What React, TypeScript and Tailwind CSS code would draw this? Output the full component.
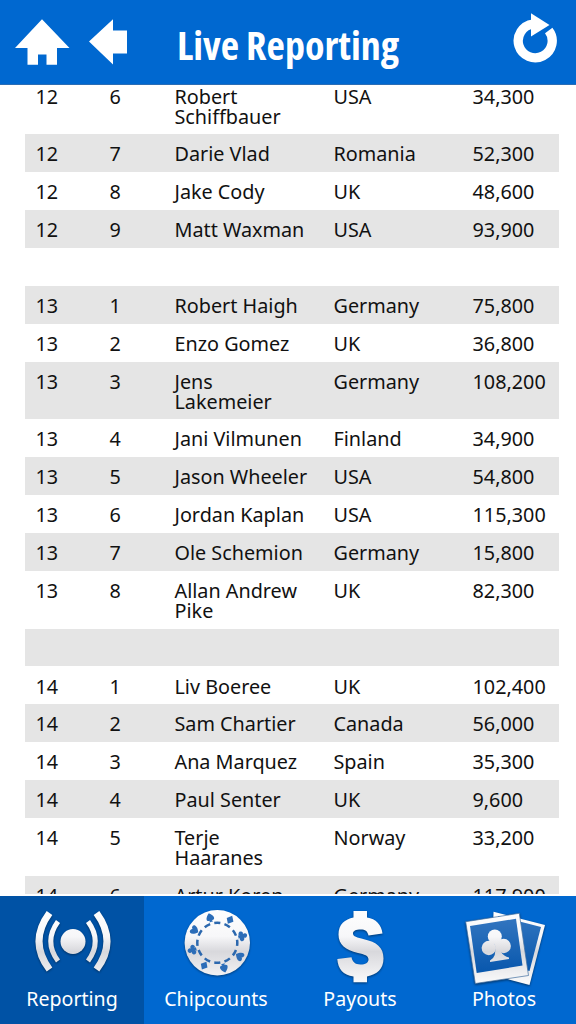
import { clsx } from 'clsx';
import type { ReactNode } from 'react';

type Row = {
  table?: string;
  seat?: string;
  name?: string;
  country?: string;
  chips?: string;
};

const rows: Row[] = [
  { table: '12', seat: '6', name: 'Robert Schiffbauer', country: 'USA', chips: '34,300' },
  { table: '12', seat: '7', name: 'Darie Vlad', country: 'Romania', chips: '52,300' },
  { table: '12', seat: '8', name: 'Jake Cody', country: 'UK', chips: '48,600' },
  { table: '12', seat: '9', name: 'Matt Waxman', country: 'USA', chips: '93,900' },
  {},
  { table: '13', seat: '1', name: 'Robert Haigh', country: 'Germany', chips: '75,800' },
  { table: '13', seat: '2', name: 'Enzo Gomez', country: 'UK', chips: '36,800' },
  { table: '13', seat: '3', name: 'Jens Lakemeier', country: 'Germany', chips: '108,200' },
  { table: '13', seat: '4', name: 'Jani Vilmunen', country: 'Finland', chips: '34,900' },
  { table: '13', seat: '5', name: 'Jason Wheeler', country: 'USA', chips: '54,800' },
  { table: '13', seat: '6', name: 'Jordan Kaplan', country: 'USA', chips: '115,300' },
  { table: '13', seat: '7', name: 'Ole Schemion', country: 'Germany', chips: '15,800' },
  { table: '13', seat: '8', name: 'Allan Andrew Pike', country: 'UK', chips: '82,300' },
  {},
  { table: '14', seat: '1', name: 'Liv Boeree', country: 'UK', chips: '102,400' },
  { table: '14', seat: '2', name: 'Sam Chartier', country: 'Canada', chips: '56,000' },
  { table: '14', seat: '3', name: 'Ana Marquez', country: 'Spain', chips: '35,300' },
  { table: '14', seat: '4', name: 'Paul Senter', country: 'UK', chips: '9,600' },
  { table: '14', seat: '5', name: 'Terje Haaranes', country: 'Norway', chips: '33,200' },
  { table: '14', seat: '6', name: 'Artur Koren', country: 'Germany', chips: '117,900' },
];

function HomeIcon() {
  return (
    <svg width="56" height="48" viewBox="0 0 56 48" fill="#fff">
      <path d="M28 1.300 55.500 30H43v16.700H32.500V36.500H24v10.200H13.500V30H1Z" />
    </svg>
  );
}

function BackIcon() {
  return (
    <svg width="41" height="46" viewBox="0 0 41 46" fill="#fff">
      <path d="M2 22.500 26 .3V11.500H40v23H26v11Z" />
    </svg>
  );
}

function RefreshIcon() {
  return (
    <svg width="46" height="52" viewBox="0 0 46 52">
      <path d="M35.700 18.500A17 17 0 1 1 20 12" fill="none" stroke="#fff" strokeWidth="9.300" />
      <path d="M18 1.300 36.500 13 18 24.500Z" fill="#fff" />
    </svg>
  );
}

// Metallic fill shared by all tab icons
function Silver({ id }: { id: string }) {
  return (
    <linearGradient id={id} x1="0" y1="10" x2="0" y2="86" gradientUnits="userSpaceOnUse">
      <stop offset="0" stopColor="#fff" />
      <stop offset=".4" stopColor="#f7f7f9" />
      <stop offset=".6" stopColor="#d8d8dc" />
      <stop offset="1" stopColor="#f9f9fa" />
    </linearGradient>
  );
}

function ReportingIcon() {
  return (
    <svg width="144" height="92" viewBox="0 0 144 92" className="drop-shadow-[0_1px_1px_rgba(0,0,0,0.4)]">
      <defs>
        <Silver id="reporting" />
      </defs>
      <circle cx="73" cy="45.500" r="12.500" fill="url(#reporting)" />
      <g fill="none" stroke="url(#reporting)">
        <path d="M49.500 17Q28.500 45.500 49.500 73.500M96.500 17Q117.500 45.500 96.500 73.500" strokeWidth="7" />
        <path d="M58 25.500Q43.500 45.500 58 65M88 25.500Q102.500 45.500 88 65" strokeWidth="5" />
      </g>
    </svg>
  );
}

const club =
  'M0-4.500A2.300 2.300 0 0 1 1.800-.8 2.300 2.300 0 1 1 1 3L2 4.500H-2L-1 3A2.300 2.300 0 1 1-1.800-.8 2.300 2.300 0 0 1 0-4.500Z';
const diamond = 'M0-4.500 3.800 0 0 4.500-3.800 0Z';
const spade = 'M0-4.500C5-.5 5 3.500 1 3L2 4.500H-2L-1 3C-5 3.500-5-.5 0-4.500Z';
const heart = 'M0 4.500C-6 .5-5-3.500-2.500-3.500Q-.5-3.500 0-2 .5-3.500 2.500-3.500C5-3.500 6 .5 0 4.500Z';

const chipMarks = [
  { angle: -16, d: spade },
  { angle: 29, d: diamond },
  { angle: 75, d: club },
  { angle: 121, d: heart },
  { angle: 165, d: spade },
  { angle: 210, d: diamond },
  { angle: 254, d: club },
  { angle: 299, d: heart },
];

function ChipIcon() {
  return (
    <svg width="144" height="92" viewBox="0 0 144 92" className="drop-shadow-[0_1px_1px_rgba(0,0,0,0.4)]">
      <defs>
        <Silver id="chip" />
      </defs>
      <circle cx="73.300" cy="46.800" r="32.700" fill="url(#chip)" />
      <circle
        cx="73.300"
        cy="46.800"
        r="20"
        fill="none"
        stroke="#2c68ae"
        strokeWidth="2.500"
        pathLength="120"
        strokeDasharray="6 4"
        strokeDashoffset="3"
      />
      {chipMarks.map(({ angle, d }) => (
        <g key={angle} transform={`rotate(${angle} 73.300 46.800) translate(73.300 20.500)`}>
          <path d={d} fill="#2c6db8" />
        </g>
      ))}
    </svg>
  );
}

function DollarIcon() {
  return (
    <svg width="144" height="92" viewBox="0 0 144 92" className="drop-shadow-[0_1px_1px_rgba(0,0,0,0.45)]">
      <defs>
        <Silver id="dollar" />
      </defs>
      <path
        fill="url(#dollar)"
        d="M65.500 15H79V21.500C88 23 93.500 28.500 94.500 37.500L80.500 39.500C79.500 35 77 33.500 73 33.500C67.500 33.500 65 35 65 37.500C65 40.500 69 41.500 76 43.200C88.500 46 95.500 51 95.500 62.500C95.500 73 89 78.500 79 80.500V86.300H65.500V80.500C55 79 50 73 49.300 63L63.500 61.300C64.500 66 67 68.500 72.500 68.500C77.500 68.500 80.500 66.500 80.500 63.500C80.500 59.500 76.500 58.500 70 57C57.500 54 50.500 48.500 50.500 38.500C50.500 28.500 57 23 65.500 21.500Z"
      />
    </svg>
  );
}

function PhotosIcon() {
  return (
    <svg width="144" height="92" viewBox="0 0 144 92" className="drop-shadow-[0_1px_1px_rgba(0,0,0,0.5)]">
      <defs>
        <Silver id="photos" />
        <linearGradient id="print" x1="0" y1="0" x2="0" y2="1">
          <stop offset="0" stopColor="#3275bf" />
          <stop offset="1" stopColor="#0857ad" />
        </linearGradient>
      </defs>
      <path d="M61.500 15.700 113 29 97.500 89 60 79Z" fill="url(#photos)" />
      <path d="M66 20 109 31 97.500 75 70 68Z" fill="url(#print)" />
      <path d="M33.700 25.700 87.300 17.300 96.500 79.500 43.300 87.500Z" fill="url(#photos)" stroke="#426f9f" strokeWidth=".7" />
      <path d="M38 30 84 22.800 90.500 69.500 44.700 77Z" fill="url(#print)" />
      <g fill="url(#photos)">
        <circle cx="62.800" cy="40.500" r="7" />
        <circle cx="56.800" cy="52" r="7.200" />
        <circle cx="71.700" cy="50" r="7.200" />
        <path d="M60 45H66.500Q66.500 59 77 61.500V63L58 66V64.500Q65 61 63 49Z" />
      </g>
    </svg>
  );
}

const tabs: { label: string; icon: ReactNode; active?: boolean }[] = [
  { label: 'Reporting', icon: <ReportingIcon />, active: true },
  { label: 'Chipcounts', icon: <ChipIcon /> },
  { label: 'Payouts', icon: <DollarIcon /> },
  { label: 'Photos', icon: <PhotosIcon /> },
];

export default function App() {
  return (
    <div className="flex h-screen w-full flex-col overflow-hidden bg-white font-['Noto_Sans',sans-serif] text-[#111]">
      {/* Header */}
      <header className="grid h-[85px] shrink-0 grid-cols-[144px_1fr_144px] items-center border-b border-[#2b6db5] bg-[#0068d0] text-white">
        <div className="flex items-center gap-[7px] pl-3.5">
          <button aria-label="Home">
            <HomeIcon />
          </button>
          <button className="pl-2.5" aria-label="Back">
            <BackIcon />
          </button>
        </div>
        <h1 className="pt-1.5 text-center font-['Open_Sans',sans-serif] text-[40px] leading-none font-bold whitespace-nowrap [font-stretch:75%]">
          Live Reporting
        </h1>
        <button className="justify-self-end pr-[17px] pb-2" aria-label="Refresh">
          <RefreshIcon />
        </button>
      </header>

      {/* Seat list */}
      <main className="min-h-0 flex-1 overflow-hidden pr-[17px] pl-[25px]">
        <div className="-mt-[8.4px]">
          {rows.map((row, i) => (
            <div
              key={i}
              className={clsx(
                'grid min-h-[37.9px] grid-cols-[74px_65px_159px_139px_1fr] pt-[10.1px] pb-[8px] pl-[10.5px] text-[19.8px] leading-[19.8px]',
                i % 2 === 1 && 'bg-[#e5e5e5]',
              )}
            >
              <span>{row.table}</span>
              <span>{row.seat}</span>
              <span className="pr-[23px]">{row.name}</span>
              <span>{row.country}</span>
              <span>{row.chips}</span>
            </div>
          ))}
        </div>
      </main>

      {/* Tab bar */}
      <nav className="grid h-[130px] shrink-0 grid-cols-4 border-t-2 border-white bg-[#0068d0] text-white">
        {tabs.map((tab) => (
          <button
            key={tab.label}
            className={clsx('flex flex-col items-center', tab.active && 'bg-[#0052a5]')}
          >
            {tab.icon}
            <span className="text-[19.6px] leading-[22px]">{tab.label}</span>
          </button>
        ))}
      </nav>
    </div>
  );
}
